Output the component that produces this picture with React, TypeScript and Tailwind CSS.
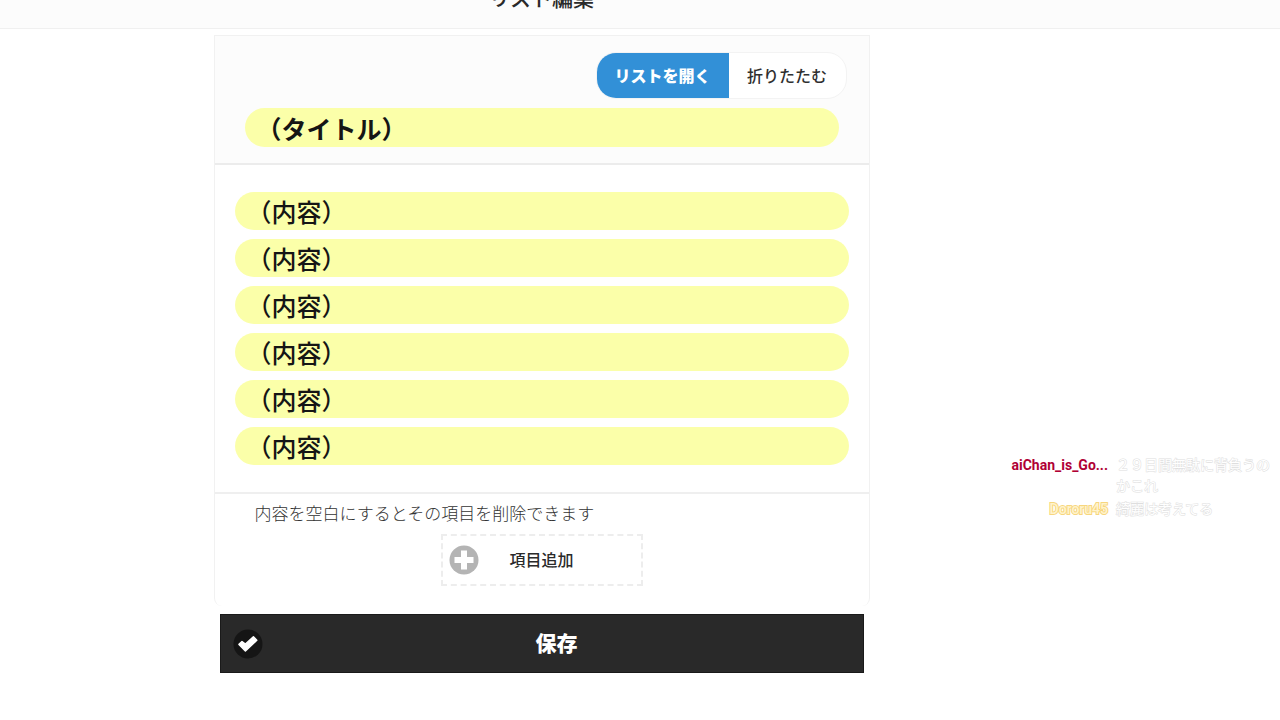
import { useState } from "react";

const ITEM_COUNT = 6;

const CHAT = [
  { name: "aiChan_is_Go...", color: "font-bold text-[#b00035]", text: "２９日間無駄に背負うのかこれ" },
  {
    name: "Dororu45",
    color: "font-medium text-[#fff3cc] [-webkit-text-stroke:2px_#f7d67e] [paint-order:stroke]",
    text: "綺麗は考えてる",
  },
];

function PlusIcon() {
  return (
    <svg viewBox="0 0 30 30" className="size-[30px]" aria-hidden>
      <circle cx="15" cy="15" r="14.5" fill="#b4b4b4" />
      <path d="M12 5.5h6V12h6.5v6H18v6.5h-6V18H5.5v-6H12z" fill="#fff" />
    </svg>
  );
}

function CheckIcon() {
  return (
    <svg viewBox="0 0 30 30" className="size-[30px]" aria-hidden>
      <circle cx="15" cy="15" r="14.5" fill="#151515" />
      <path
        d="M6 15.4 9 12.6 12.4 15 20.4 7.8 23.8 11.2 12.4 22z"
        fill="#fff"
        stroke="#fff"
        strokeWidth="1.5"
        strokeLinejoin="round"
      />
    </svg>
  );
}

function ViewToggle() {
  const [open, setOpen] = useState(true);
  return (
    <div className="flex h-[47px] overflow-hidden rounded-[20px] border border-[#f3f3f3] bg-white text-base">
      <button
        type="button"
        aria-pressed={open}
        onClick={() => setOpen(true)}
        className="w-[132px] bg-[#3290d7] pt-[2px] font-black text-white"
      >
        リストを開く
      </button>
      <button
        type="button"
        aria-pressed={!open}
        onClick={() => setOpen(false)}
        className="w-[117px] pt-[2px] font-medium text-[#2f2f2f]"
      >
        折りたたむ
      </button>
    </div>
  );
}

function ListCard() {
  const [title, setTitle] = useState("（タイトル）");
  const [items, setItems] = useState<string[]>(() => Array(ITEM_COUNT).fill("（内容）"));

  const update = (i: number, value: string) =>
    setItems((prev) => prev.map((v, j) => (j === i ? value : v)));

  return (
    <section className="rounded-b-lg border border-b-0 border-[#f1f1f1]">
      <div className="border-b-2 border-[#ececec] bg-[#fcfcfc] px-[30px] py-4">
        <div className="-mr-2 flex justify-end">
          <ViewToggle />
        </div>
        <input
          aria-label="タイトル"
          value={title}
          onChange={(e) => setTitle(e.target.value)}
          className="mt-[9px] h-[39px] w-full rounded-full bg-[#fbffa9] px-3 text-[25px] font-bold text-[#151515] outline-none"
        />
      </div>

      <ul className="flex flex-col gap-[9px] border-b-2 border-[#efefef] px-5 py-[27px]">
        {items.map((value, i) => (
          <li key={i} className="flex">
            <input
              aria-label={`内容 ${i + 1}`}
              value={value}
              onChange={(e) => update(i, e.target.value)}
              className="h-[38px] w-full rounded-full bg-[#fbffa9] px-3 text-[25px] font-medium text-[#151515] outline-none"
            />
          </li>
        ))}
      </ul>

      <div className="pt-1 pb-5">
        <p className="px-10 text-[17px] leading-8 font-light text-[#333]">
          内容を空白にするとその項目を削除できます
        </p>
        <button
          type="button"
          onClick={() => setItems((prev) => [...prev, "（内容）"])}
          className="mx-auto mt-1 grid h-[52px] w-[202px] grid-cols-[30px_1fr_30px] items-center border-2 border-dashed border-[#ededed] px-[6px] text-base font-medium text-[#2a2a2a]"
        >
          <PlusIcon />
          <span className="pt-[2px]">項目追加</span>
        </button>
      </div>
    </section>
  );
}

function ChatOverlay() {
  return (
    <aside className="absolute top-[455px] right-2 grid grid-cols-[98px_156px] gap-x-2 gap-y-[2px] text-sm leading-[21px]">
      {CHAT.map((m) => (
        <div key={m.name} className="contents">
          <span className={`text-right ${m.color}`}>{m.name}</span>
          <span className="text-white [-webkit-text-stroke:1px_#dedede] [paint-order:stroke]">
            {m.text}
          </span>
        </div>
      ))}
    </aside>
  );
}

export default function App() {
  return (
    <div className="relative overflow-hidden bg-white font-[Roboto,'Noto_Sans_CJK_JP',sans-serif]">
      <header className="-mt-8 flex h-[61px] items-center justify-center border-b border-[#f0f0f0] bg-[#fcfcfc] pt-[3px] pr-[197px]">
        <h1 className="text-[21px] font-medium text-[#2a2a2a]">リスト編集</h1>
      </header>

      <main className="pt-[6px] pr-[197px]">
        <div className="mx-auto max-w-[656px]">
          <ListCard />
          <div className="px-[6px] pt-2">
            <button
              type="button"
              className="grid h-[59px] w-full grid-cols-[30px_1fr] items-center border border-[#1a1a1a] bg-[#292929] px-3 text-[21px] font-black text-white"
            >
              <CheckIcon />
              <span className="pt-[2px]">保存</span>
            </button>
          </div>
        </div>
      </main>
      <ChatOverlay />
    </div>
  );
}
